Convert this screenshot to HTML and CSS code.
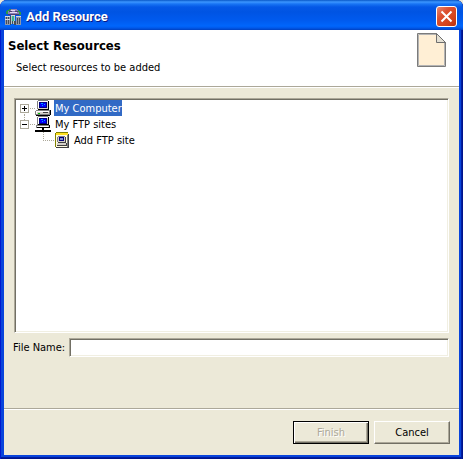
FILE: index.html
```
<!DOCTYPE html>
<html lang="en">
<head>
    <meta charset="UTF-8">
    <meta name="viewport" content="width=device-width, initial-scale=1.0">
    <title>Add Resource</title>
    <link rel="stylesheet" href="styles.css">
</head>
<body>
    <svg class="symbols" shape-rendering="crispEdges">
        <symbol id="computer" viewBox="0 0 16 16">
            <path fill="#808080" d="M3 0h10v1H3zM2 1h1v8H2zM1 10h13v1H1zM0 11h1v4H0z"/>
            <path fill="#d4d0c8" d="M3 1h10v8H3z"/>
            <path fill="#fff" d="M3 1h10v1H3zM3 2h1v6H3z"/>
            <path fill="#000" d="M13 1h1v8h-1zM3 9h11v1H3zM15 10h1v5h-1zM1 15h14v1H1z"/>
            <path fill="#000080" d="M4 2h8v6H4z"/>
            <path fill="#0000ff" d="M5 3h6v4H5z"/>
            <path fill="#00a8ff" d="M6 3h2v1H6zM9 4h1v1H9zM7 5h1v1H7z"/>
            <path fill="#d4d0c8" d="M1 11h13v4H1z"/>
            <path fill="#fff" d="M1 11h13v1H1zM1 12h1v2H1z"/>
            <path fill="#808080" d="M14 10h1v5h-1zM1 14h13v1H1z"/>
            <path fill="#00c000" d="M3 13h2v1H3z"/>
            <path fill="#404040" d="M8 12h5v1H8z"/>
        </symbol>
        <symbol id="network" viewBox="0 0 16 16">
            <path fill="#808080" d="M3 0h10v1H3zM2 1h1v8H2zM1 9h13v1H1zM1 10h1v2H1z"/>
            <path fill="#d4d0c8" d="M3 1h10v7H3zM2 10h12v1H2z"/>
            <path fill="#fff" d="M3 1h10v1H3zM3 2h1v6H3zM2 10h11v1H2z"/>
            <path fill="#000" d="M13 1h1v8h-1zM3 8h11v1H3zM14 9h1v3h-1zM2 11h12v1H2zM7 12h2v3H7zM0 14h16v2H0z"/>
            <path fill="#000080" d="M4 2h8v6H4z"/>
            <path fill="#0000ff" d="M5 3h6v4H5z"/>
            <path fill="#00a8ff" d="M6 3h2v1H6zM9 4h1v1H9zM7 5h1v1H7z"/>
        </symbol>
        <symbol id="addsite" viewBox="0 0 16 16">
            <path fill="#808000" d="M2 0h12v1H2zM1 1h1v14H1z"/>
            <path fill="#ffe020" d="M2 1h12v2H2z"/>
            <path fill="#fffbe0" d="M2 3h11v12H2z"/>
            <path fill="#808080" d="M13 3h1v12h-1zM4 4h7v1H4zM3 5h1v5H3z"/>
            <path fill="#404040" d="M14 2h1v14H2v-1h12zM11 5h1v6H4v-1h7zM12 11h1v3H3v-1h9z"/>
            <path fill="#d4d0c8" d="M4 5h7v5H4zM3 11h9v2H3z"/>
            <path fill="#000080" d="M5 5h5v4H5z"/>
            <path fill="#8090d0" d="M6 6h3v2H6z"/>
        </symbol>
    </svg>

    <main class="window">
        <div class="titlebar">
            <svg class="app_icon" viewBox="0 0 17 16" shape-rendering="crispEdges">
                <path fill="#2c9848" d="M4 0h2v1H4zM2 1h3v1H2zM1 2h2v3H1zM12 1h2v1h-2zM13 2h2v1h-2zM14 3h2v3h-2z"/>
                <path fill="#8c80b8" d="M6 0h6v1h1v2h1v3H3V2h2V1h1z"/>
                <path fill="#e8dcf4" d="M6 1h4v1H6zM5 3h7v1H5z"/>
                <path fill="#504070" d="M4 2h3v1H4zM10 2h3v1h-3zM3 5h11v1H3z"/>
                <path fill="#9098a8" d="M0 7h5v9H0zM11 7h5v9h-5z"/>
                <path fill="#d8dce4" d="M0 7h5v1H0zM11 7h5v1h-5zM0 10h5v1H0zM6 6h4v1H6z"/>
                <path fill="#b4c8c8" d="M6 7h4v8H6z"/>
                <path fill="#444c5c" d="M1 8h1v2H1zM3 8h1v2H3zM1 11h1v4H1zM3 11h1v4H3zM5 7h1v9H5zM7 12h1v3H7zM9 12h2v4H9zM12 9h1v6h-1zM14 9h1v6h-1z"/>
                <path fill="#38b498" d="M7 7h2v5H7z"/>
            </svg>
            <h1>Add Resource</h1>
            <button class="close" type="button" aria-label="Close">
                <svg viewBox="0 0 19 19"><path d="M4.500 4.500l10 10M14.500 4.500l-10 10"/></svg>
            </button>
        </div>

        <div class="client">
            <header class="banner">
                <div class="banner_text">
                    <h2>Select Resources</h2>
                    <p>Select resources to be added</p>
                </div>
                <svg class="page_icon" viewBox="0 0 29 34">
                    <path fill="#ffefd5" stroke="#7b7b7b" d="M.5.5H19.5L28.5 9.5V33.5H.5z"/>
                    <path fill="none" stroke="#b4b4b4" d="M1.5 32.5V1.5H19M27.5 10V32.5H1.5"/>
                    <path fill="#e4e0d4" stroke="#6e6e6e" d="M19.5 .5V9.5H28.5z"/>
                </svg>
            </header>

            <form class="content">
                <ul class="tree">
                    <li>
                        <div class="row">
                            <button class="toggle plus" type="button" aria-label="Expand My Computer"></button>
                            <svg class="icon"><use href="#computer"/></svg>
                            <span class="label selected">My Computer</span>
                        </div>
                    </li>
                    <li>
                        <div class="row">
                            <button class="toggle" type="button" aria-label="Collapse My FTP sites"></button>
                            <svg class="icon"><use href="#network"/></svg>
                            <span class="label">My FTP sites</span>
                        </div>
                        <ul class="children">
                            <li class="row">
                                <span class="branch"></span>
                                <svg class="icon"><use href="#addsite"/></svg>
                                <span class="label">Add FTP site</span>
                            </li>
                        </ul>
                    </li>
                </ul>
                <div class="field">
                    <label for="filename">File Name:</label>
                    <input type="text" id="filename">
                </div>
            </form>

            <footer class="buttons">
                <button class="btn default" type="submit" disabled>Finish</button>
                <button class="btn" type="button">Cancel</button>
            </footer>
        </div>
    </main>
</body>
</html>
```
FILE: styles.css
```
* {
    margin: 0;
    padding: 0;
    box-sizing: border-box;
}

body {
    background-color: #ece9d8;
    color: #000;
    font-family: Tahoma, "DejaVu Sans Condensed", sans-serif;
    font-size: 11px;
    line-height: 16px;
}

ul { list-style: none; }

.symbols {
    position: absolute;
    width: 0;
    height: 0;
}

.window {
    display: flex;
    flex-direction: column;
    min-height: 100vh;
    padding: 0 4px 4px;
    background-color: #0844dc;
    border-radius: 7px 7px 0 0;
    box-shadow: inset 1px 0 #0019cf, inset -1px 0 #00138c, inset -2px 0 #001ea0, inset 0 -1px #00138c, inset 0 -2px #001ea0;
}

/* title bar */
.titlebar {
    display: flex;
    align-items: center;
    height: 30px;
    margin: 0 -4px;
    padding: 3px 6px 0 5px;
    border-radius: 7px 7px 0 0;
    background: linear-gradient(#0958c8 0, #3c96ff 2px, #1874f4 4px, #0458e6 7px, #0054e3 12px, #005aee 20px, #0066fc 26px, #0058ea 28px, #0040c0 30px);
}

.app_icon {
    width: 17px;
    height: 16px;
}

.titlebar h1 {
    flex: 1;
    margin-left: 4px;
    color: #fff;
    font: bold 13px/16px "Trebuchet MS", Roboto, sans-serif;
    text-shadow: 1px 1px #0a1883;
}

.close {
    width: 21px;
    height: 21px;
    border: 1px solid #fff;
    border-radius: 3px;
    background: linear-gradient(135deg, #e88870, #dc5030 35%, #d4441c 70%, #b83010);
}

.close svg {
    display: block;
    width: 19px;
    height: 19px;
    fill: none;
    stroke: #fff;
    stroke-width: 2;
}

/* dialog area */
.client {
    display: flex;
    flex: 1;
    flex-direction: column;
    background-color: #ece9d8;
}

.banner {
    display: flex;
    justify-content: space-between;
    height: 58px;
    padding: 3px 13px 0 4px;
    background-color: #fff;
    border-bottom: 1px solid #fff;
    box-shadow: inset 0 -1px #aca899;
}

.banner_text { padding-top: 5px; }

.banner h2 {
    font-size: 13px;
    line-height: 16px;
}

.banner p { padding: 6px 0 0 8px; }

.page_icon {
    width: 29px;
    height: 34px;
}

.content {
    display: flex;
    flex: 1;
    flex-direction: column;
    padding: 10px 10px 51px;
}

.tree, .field input {
    border: 1px solid;
    border-color: #aca899 #fff #fff #aca899;
    background-color: #fff;
    box-shadow: inset 1px 1px #716f64, inset -1px -1px #f1efe2;
}

.tree {
    flex: 1;
    padding: 1px 5px;
}

.row {
    display: flex;
    align-items: center;
    height: 16px;
}

.toggle {
    position: relative;
    width: 9px;
    height: 9px;
    margin-right: 6px;
    border: 1px solid #aca899;
    background: linear-gradient(#000, #000) center / 5px 1px no-repeat #fff;
}

.toggle.plus {
    background: linear-gradient(#000, #000) center / 5px 1px no-repeat, linear-gradient(#000, #000) center / 1px 5px no-repeat, #fff;
}

/* dotted connector lines */
.toggle::after {
    content: "";
    position: absolute;
    top: 3px;
    left: 9px;
    width: 5px;
    border-top: 1px dotted #aca899;
}

.toggle.plus::before {
    content: "";
    position: absolute;
    top: 9px;
    left: 3px;
    height: 6px;
    border-left: 1px dotted #aca899;
}

.branch {
    width: 11px;
    height: 9px;
    align-self: flex-start;
    border: dotted #aca899;
    border-width: 0 0 1px 1px;
}

.children { padding-left: 23px; }

.icon {
    width: 16px;
    height: 16px;
}

.label {
    height: 16px;
    margin-left: 3px;
    padding: 1px 0 0 1px;
}

.selected {
    background-color: #316ac5;
    color: #fff;
}

.field {
    display: flex;
    align-items: center;
    gap: 4px;
    margin: 5px 0 0 -1px;
}

.field input {
    flex: 1;
    min-width: 0;
    height: 19px;
    padding: 0 4px;
    font: inherit;
    outline: none;
}

.buttons {
    display: flex;
    justify-content: flex-end;
    gap: 5px;
    padding: 12px 9px 11px;
    border-top: 1px solid #aca899;
    box-shadow: inset 0 1px #fff;
}

.btn {
    width: 76px;
    height: 23px;
    border: 1px solid;
    border-color: #fff #716f64 #716f64 #fff;
    background-color: #ece9d8;
    box-shadow: inset -1px -1px #aca899;
    color: #000;
    font: inherit;
}

.btn.default {
    border-color: #000;
    box-shadow: inset 1px 1px #fff, inset -1px -1px #716f64, inset -2px -2px #aca899;
}

.btn:disabled {
    color: #aca899;
    text-shadow: 1px 1px #fff;
}
```
